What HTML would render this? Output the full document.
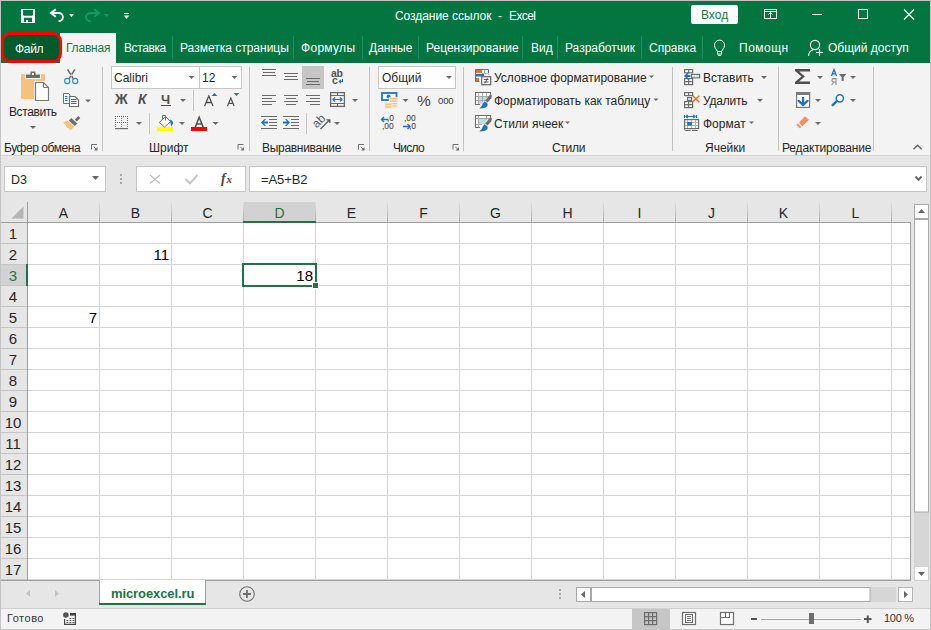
<!DOCTYPE html>
<html><head><meta charset="utf-8">
<style>
*{margin:0;padding:0;box-sizing:border-box}
html,body{width:931px;height:630px;overflow:hidden;background:#f3f3f3;font-family:"Liberation Sans",sans-serif;}
.a{position:absolute}
.t{position:absolute;white-space:nowrap;font-size:12px;line-height:12px;color:#262626}
.w{color:#fff}
.sep{position:absolute;width:1px;background:#d0d0d0}
.tsep{position:absolute;width:1px;top:36px;height:23px;background:#1f8d63}
.gsep{position:absolute;width:1px;top:67px;height:84px;background:#c2c2c2}
.dd{position:absolute;width:0;height:0;border-left:3px solid transparent;border-right:3px solid transparent;border-top:3px solid #6a6a6a}
.glab{position:absolute;top:142px;font-size:12px;line-height:12px;color:#262626;white-space:nowrap}
.launch{position:absolute;width:7px;height:7px}
.ch{position:absolute;top:202px;height:20px;font-size:14px;line-height:14px;color:#262626;text-align:center;padding-top:4px}
.rh{position:absolute;left:1px;width:26px;height:20px;font-size:14px;line-height:14px;color:#262626;text-align:center;padding-top:4px}
.cell{position:absolute;font-size:14px;line-height:14px;color:#000;text-align:right}
</style></head>
<body>
<!-- window border -->
<div class="a" style="left:0;top:0;width:931px;height:630px;border:1px solid #c4c4c4;z-index:50;pointer-events:none"></div>

<!-- title bar + tabs -->
<div class="a" style="left:1px;top:1px;width:929px;height:62px;background:#037541"></div>
<div class="t w" style="left:395px;top:10px;font-size:12px;letter-spacing:-0.05px">Создание ссылок</div>
<div class="t w" style="left:498px;top:10px;font-size:12px">-</div>
<div class="t w" style="left:509px;top:10px;font-size:12px;letter-spacing:-0.6px">Excel</div>

<!-- Vhod button -->
<div class="a" style="left:691px;top:5px;width:47px;height:19px;background:#fff;border-radius:2px"></div>
<div class="t" style="left:701px;top:9px;color:#217346">Вход</div>

<!-- tabs -->
<div class="a" style="left:1px;top:32px;width:61px;height:31px;background:#005a2a;border:3px solid #ff0000;border-radius:9px;z-index:2"></div>
<div class="t w" style="left:15px;top:43px;z-index:3;letter-spacing:-0.3px">Файл</div>
<div class="a" style="left:60px;top:33px;width:56px;height:30px;background:#f3f3f3"></div>
<div class="t" style="left:66px;top:42px;color:#217346;letter-spacing:-0.2px">Главная</div>
<div class="t w" style="left:124px;top:42px;letter-spacing:-0.4px">Вставка</div>
<div class="tsep" style="left:172px"></div>
<div class="t w" style="left:180px;top:42px;">Разметка страницы</div>
<div class="tsep" style="left:293px"></div>
<div class="t w" style="left:301px;top:42px;letter-spacing:0.3px">Формулы</div>
<div class="tsep" style="left:362px"></div>
<div class="t w" style="left:369px;top:42px;">Данные</div>
<div class="tsep" style="left:418px"></div>
<div class="t w" style="left:426px;top:42px;">Рецензирование</div>
<div class="tsep" style="left:522px"></div>
<div class="t w" style="left:531px;top:42px;">Вид</div>
<div class="tsep" style="left:557px"></div>
<div class="t w" style="left:565px;top:42px;">Разработчик</div>
<div class="tsep" style="left:641px"></div>
<div class="t w" style="left:649px;top:42px;">Справка</div>
<div class="tsep" style="left:702px"></div>
<div class="t w" style="left:739px;top:42px;letter-spacing:0.5px">Помощн</div>
<div class="t w" style="left:828px;top:42px;">Общий доступ</div>

<!-- ribbon -->
<div class="a" style="left:1px;top:155px;width:929px;height:1px;background:#d5d5d5"></div>

<!-- group separators -->
<div class="gsep" style="left:102px"></div>
<div class="gsep" style="left:249px"></div>
<div class="gsep" style="left:369px"></div>
<div class="gsep" style="left:463px"></div>
<div class="gsep" style="left:672px"></div>
<div class="gsep" style="left:778px"></div>
<div class="gsep" style="left:873px"></div>

<div class="glab" style="left:4px;letter-spacing:-0.45px">Буфер обмена</div>
<div class="glab" style="left:149px">Шрифт</div>
<div class="glab" style="left:262px;letter-spacing:-0.3px">Выравнивание</div>
<div class="glab" style="left:393px;letter-spacing:-0.7px">Число</div>
<div class="glab" style="left:552px;letter-spacing:-0.3px">Стили</div>
<div class="glab" style="left:705px">Ячейки</div>
<div class="glab" style="left:782px;letter-spacing:-0.15px">Редактирование</div>

<!-- paste -->
<div class="t" style="left:9px;top:106px;letter-spacing:-0.4px">Вставить</div>

<!-- font group -->
<div class="a" style="left:111px;top:66px;width:89px;height:23px;background:#fff;border:1px solid #c6c6c6"></div>
<div class="a" style="left:199px;top:66px;width:43px;height:23px;background:#fff;border:1px solid #c6c6c6"></div>
<div class="t" style="left:114px;top:72px">Calibri</div>
<div class="t" style="left:202px;top:72px">12</div>

<!-- number -->
<div class="a" style="left:378px;top:66px;width:78px;height:23px;background:#fff;border:1px solid #c6c6c6"></div>
<div class="t" style="left:382px;top:72px">Общий</div>

<!-- styles -->
<div class="t" style="left:494px;top:72px">Условное форматирование</div>
<div class="t" style="left:494px;top:95px">Форматировать как таблицу</div>
<div class="t" style="left:494px;top:118px">Стили ячеек</div>

<!-- cells -->
<div class="t" style="left:703px;top:72px">Вставить</div>
<div class="t" style="left:703px;top:95px;letter-spacing:-0.2px">Удалить</div>
<div class="t" style="left:703px;top:118px">Формат</div>

<!-- formula area -->
<div class="a" style="left:1px;top:156px;width:929px;height:424px;background:#e6e6e6"></div>
<div class="a" style="left:4px;top:166px;width:102px;height:26px;background:#fff;border:1px solid #c6c6c6"></div>
<div class="t" style="left:11px;top:174px;font-size:12.5px">D3</div>
<div class="a" style="left:136px;top:166px;width:110px;height:26px;background:#fff;border:1px solid #c6c6c6"></div>
<div class="a" style="left:249px;top:166px;width:678px;height:26px;background:#fff;border:1px solid #c6c6c6"></div>
<div class="t" style="left:261px;top:173px;font-size:13px;line-height:13px;letter-spacing:-0.1px">=A5+B2</div>

<!-- grid -->
<!--GRID-->
<div class="a" style="left:28px;top:223px;width:882px;height:357px;background:#fff"></div>
<div class="a" style="left:99px;top:223px;width:1px;height:357px;background:#d4d4d4"></div>
<div class="a" style="left:99px;top:202px;width:1px;height:20px;background:linear-gradient(#e0e0e0,#a8a8a8)"></div>
<div class="a" style="left:171px;top:223px;width:1px;height:357px;background:#d4d4d4"></div>
<div class="a" style="left:171px;top:202px;width:1px;height:20px;background:linear-gradient(#e0e0e0,#a8a8a8)"></div>
<div class="a" style="left:243px;top:223px;width:1px;height:357px;background:#d4d4d4"></div>
<div class="a" style="left:243px;top:202px;width:1px;height:20px;background:linear-gradient(#e0e0e0,#a8a8a8)"></div>
<div class="a" style="left:315px;top:223px;width:1px;height:357px;background:#d4d4d4"></div>
<div class="a" style="left:315px;top:202px;width:1px;height:20px;background:linear-gradient(#e0e0e0,#a8a8a8)"></div>
<div class="a" style="left:387px;top:223px;width:1px;height:357px;background:#d4d4d4"></div>
<div class="a" style="left:387px;top:202px;width:1px;height:20px;background:linear-gradient(#e0e0e0,#a8a8a8)"></div>
<div class="a" style="left:459px;top:223px;width:1px;height:357px;background:#d4d4d4"></div>
<div class="a" style="left:459px;top:202px;width:1px;height:20px;background:linear-gradient(#e0e0e0,#a8a8a8)"></div>
<div class="a" style="left:531px;top:223px;width:1px;height:357px;background:#d4d4d4"></div>
<div class="a" style="left:531px;top:202px;width:1px;height:20px;background:linear-gradient(#e0e0e0,#a8a8a8)"></div>
<div class="a" style="left:603px;top:223px;width:1px;height:357px;background:#d4d4d4"></div>
<div class="a" style="left:603px;top:202px;width:1px;height:20px;background:linear-gradient(#e0e0e0,#a8a8a8)"></div>
<div class="a" style="left:675px;top:223px;width:1px;height:357px;background:#d4d4d4"></div>
<div class="a" style="left:675px;top:202px;width:1px;height:20px;background:linear-gradient(#e0e0e0,#a8a8a8)"></div>
<div class="a" style="left:747px;top:223px;width:1px;height:357px;background:#d4d4d4"></div>
<div class="a" style="left:747px;top:202px;width:1px;height:20px;background:linear-gradient(#e0e0e0,#a8a8a8)"></div>
<div class="a" style="left:819px;top:223px;width:1px;height:357px;background:#d4d4d4"></div>
<div class="a" style="left:819px;top:202px;width:1px;height:20px;background:linear-gradient(#e0e0e0,#a8a8a8)"></div>
<div class="a" style="left:891px;top:223px;width:1px;height:357px;background:#d4d4d4"></div>
<div class="a" style="left:891px;top:202px;width:1px;height:20px;background:linear-gradient(#e0e0e0,#a8a8a8)"></div>
<div class="a" style="left:28px;top:243px;width:882px;height:1px;background:#d4d4d4"></div>
<div class="a" style="left:1px;top:243px;width:26px;height:1px;background:#c4c4c4"></div>
<div class="a" style="left:28px;top:264px;width:882px;height:1px;background:#d4d4d4"></div>
<div class="a" style="left:1px;top:264px;width:26px;height:1px;background:#c4c4c4"></div>
<div class="a" style="left:28px;top:285px;width:882px;height:1px;background:#d4d4d4"></div>
<div class="a" style="left:1px;top:285px;width:26px;height:1px;background:#c4c4c4"></div>
<div class="a" style="left:28px;top:306px;width:882px;height:1px;background:#d4d4d4"></div>
<div class="a" style="left:1px;top:306px;width:26px;height:1px;background:#c4c4c4"></div>
<div class="a" style="left:28px;top:327px;width:882px;height:1px;background:#d4d4d4"></div>
<div class="a" style="left:1px;top:327px;width:26px;height:1px;background:#c4c4c4"></div>
<div class="a" style="left:28px;top:348px;width:882px;height:1px;background:#d4d4d4"></div>
<div class="a" style="left:1px;top:348px;width:26px;height:1px;background:#c4c4c4"></div>
<div class="a" style="left:28px;top:369px;width:882px;height:1px;background:#d4d4d4"></div>
<div class="a" style="left:1px;top:369px;width:26px;height:1px;background:#c4c4c4"></div>
<div class="a" style="left:28px;top:390px;width:882px;height:1px;background:#d4d4d4"></div>
<div class="a" style="left:1px;top:390px;width:26px;height:1px;background:#c4c4c4"></div>
<div class="a" style="left:28px;top:411px;width:882px;height:1px;background:#d4d4d4"></div>
<div class="a" style="left:1px;top:411px;width:26px;height:1px;background:#c4c4c4"></div>
<div class="a" style="left:28px;top:432px;width:882px;height:1px;background:#d4d4d4"></div>
<div class="a" style="left:1px;top:432px;width:26px;height:1px;background:#c4c4c4"></div>
<div class="a" style="left:28px;top:453px;width:882px;height:1px;background:#d4d4d4"></div>
<div class="a" style="left:1px;top:453px;width:26px;height:1px;background:#c4c4c4"></div>
<div class="a" style="left:28px;top:474px;width:882px;height:1px;background:#d4d4d4"></div>
<div class="a" style="left:1px;top:474px;width:26px;height:1px;background:#c4c4c4"></div>
<div class="a" style="left:28px;top:495px;width:882px;height:1px;background:#d4d4d4"></div>
<div class="a" style="left:1px;top:495px;width:26px;height:1px;background:#c4c4c4"></div>
<div class="a" style="left:28px;top:516px;width:882px;height:1px;background:#d4d4d4"></div>
<div class="a" style="left:1px;top:516px;width:26px;height:1px;background:#c4c4c4"></div>
<div class="a" style="left:28px;top:537px;width:882px;height:1px;background:#d4d4d4"></div>
<div class="a" style="left:1px;top:537px;width:26px;height:1px;background:#c4c4c4"></div>
<div class="a" style="left:28px;top:558px;width:882px;height:1px;background:#d4d4d4"></div>
<div class="a" style="left:1px;top:558px;width:26px;height:1px;background:#c4c4c4"></div>
<div class="a" style="left:28px;top:579px;width:882px;height:1px;background:#d4d4d4"></div>
<div class="a" style="left:1px;top:579px;width:26px;height:1px;background:#c4c4c4"></div>
<div class="a" style="left:1px;top:222px;width:910px;height:1px;background:#9e9e9e"></div>
<div class="a" style="left:27px;top:202px;width:1px;height:379px;background:#9e9e9e"></div>
<div class="a" style="left:910px;top:222px;width:1px;height:359px;background:#9e9e9e"></div>
<div class="a" style="left:1px;top:580px;width:910px;height:1px;background:#9e9e9e"></div>
<svg class="a" style="left:11px;top:206px" width="13" height="13"><polygon points="12.5,0.5 12.5,12.5 0.5,12.5" fill="#b4b4b4"/></svg>
<div class="a" style="left:244px;top:202px;width:71px;height:19px;background:#d2d2d2"></div>
<div class="a" style="left:243px;top:221px;width:73px;height:2px;background:#217346"></div>
<div class="a" style="left:1px;top:265px;width:25px;height:20px;background:#d2d2d2"></div>
<div class="a" style="left:26px;top:264px;width:2px;height:22px;background:#217346"></div>
<div class="t" style="left:28px;top:206px;width:71px;text-align:center;font-size:14px;line-height:14px;color:#262626">A</div>
<div class="t" style="left:100px;top:206px;width:71px;text-align:center;font-size:14px;line-height:14px;color:#262626">B</div>
<div class="t" style="left:172px;top:206px;width:71px;text-align:center;font-size:14px;line-height:14px;color:#262626">C</div>
<div class="t" style="left:244px;top:206px;width:71px;text-align:center;font-size:14px;line-height:14px;color:#217346">D</div>
<div class="t" style="left:316px;top:206px;width:71px;text-align:center;font-size:14px;line-height:14px;color:#262626">E</div>
<div class="t" style="left:388px;top:206px;width:71px;text-align:center;font-size:14px;line-height:14px;color:#262626">F</div>
<div class="t" style="left:460px;top:206px;width:71px;text-align:center;font-size:14px;line-height:14px;color:#262626">G</div>
<div class="t" style="left:532px;top:206px;width:71px;text-align:center;font-size:14px;line-height:14px;color:#262626">H</div>
<div class="t" style="left:604px;top:206px;width:71px;text-align:center;font-size:14px;line-height:14px;color:#262626">I</div>
<div class="t" style="left:676px;top:206px;width:71px;text-align:center;font-size:14px;line-height:14px;color:#262626">J</div>
<div class="t" style="left:748px;top:206px;width:71px;text-align:center;font-size:14px;line-height:14px;color:#262626">K</div>
<div class="t" style="left:820px;top:206px;width:71px;text-align:center;font-size:14px;line-height:14px;color:#262626">L</div>
<div class="t" style="left:0px;top:226px;width:26px;text-align:center;font-size:15px;line-height:15px;color:#262626">1</div>
<div class="t" style="left:0px;top:247px;width:26px;text-align:center;font-size:15px;line-height:15px;color:#262626">2</div>
<div class="t" style="left:0px;top:268px;width:26px;text-align:center;font-size:15px;line-height:15px;color:#217346">3</div>
<div class="t" style="left:0px;top:289px;width:26px;text-align:center;font-size:15px;line-height:15px;color:#262626">4</div>
<div class="t" style="left:0px;top:310px;width:26px;text-align:center;font-size:15px;line-height:15px;color:#262626">5</div>
<div class="t" style="left:0px;top:331px;width:26px;text-align:center;font-size:15px;line-height:15px;color:#262626">6</div>
<div class="t" style="left:0px;top:352px;width:26px;text-align:center;font-size:15px;line-height:15px;color:#262626">7</div>
<div class="t" style="left:0px;top:373px;width:26px;text-align:center;font-size:15px;line-height:15px;color:#262626">8</div>
<div class="t" style="left:0px;top:394px;width:26px;text-align:center;font-size:15px;line-height:15px;color:#262626">9</div>
<div class="t" style="left:0px;top:415px;width:26px;text-align:center;font-size:15px;line-height:15px;color:#262626">10</div>
<div class="t" style="left:0px;top:436px;width:26px;text-align:center;font-size:15px;line-height:15px;color:#262626">11</div>
<div class="t" style="left:0px;top:457px;width:26px;text-align:center;font-size:15px;line-height:15px;color:#262626">12</div>
<div class="t" style="left:0px;top:478px;width:26px;text-align:center;font-size:15px;line-height:15px;color:#262626">13</div>
<div class="t" style="left:0px;top:499px;width:26px;text-align:center;font-size:15px;line-height:15px;color:#262626">14</div>
<div class="t" style="left:0px;top:520px;width:26px;text-align:center;font-size:15px;line-height:15px;color:#262626">15</div>
<div class="t" style="left:0px;top:541px;width:26px;text-align:center;font-size:15px;line-height:15px;color:#262626">16</div>
<div class="t" style="left:0px;top:562px;width:26px;text-align:center;font-size:15px;line-height:15px;color:#262626">17</div>
<div class="t" style="left:111px;top:247px;width:58px;text-align:right;font-size:15px;line-height:15px;color:#000">11</div>
<div class="t" style="left:39px;top:310px;width:58px;text-align:right;font-size:15px;line-height:15px;color:#000">7</div>
<div class="t" style="left:255px;top:268px;width:58px;text-align:right;font-size:15px;line-height:15px;color:#000">18</div>
<div class="a" style="left:242px;top:263px;width:75px;height:24px;border:2px solid #217346"></div>
<div class="a" style="left:312px;top:282px;width:7px;height:7px;background:#fff"></div>
<div class="a" style="left:313px;top:283px;width:5px;height:5px;background:#217346"></div>
<!--/GRID-->

<!-- sheet tab bar -->
<div class="a" style="left:1px;top:581px;width:929px;height:27px;background:#e6e6e6"></div>
<div class="a" style="left:1px;top:608px;width:929px;height:1px;background:#d0d0d0"></div>
<div class="a" style="left:99px;top:580px;width:107px;height:25px;background:#fff;border:1px solid #a0a0a0;border-top:none;border-bottom:none"></div>
<div class="a" style="left:99px;top:603px;width:107px;height:2px;background:#217346"></div>
<div class="t" style="left:111px;top:587px;font-size:13px;line-height:13px;font-weight:bold;color:#217346;letter-spacing:-0.1px">microexcel.ru</div>

<!-- status bar -->
<div class="t" style="left:7px;top:613px;font-size:11px;line-height:11px;color:#333;letter-spacing:0.5px">Готово</div>
<div class="a" style="left:632px;top:609px;width:38px;height:20px;background:#c6c6c6"></div>
<div class="t" style="left:884px;top:613px;font-size:11px;line-height:11px;color:#333;letter-spacing:-0.3px">100 %</div>

<!--TXTICONS-->
<div class="t" style="left:115px;top:92px;font-size:14px;line-height:14px;font-weight:bold;color:#505050">Ж</div>
<div class="t" style="left:138px;top:92px;font-size:14px;line-height:14px;font-weight:bold;font-style:italic;color:#505050">К</div>
<div class="t" style="left:161px;top:93px;font-size:13px;line-height:13px;font-weight:bold;color:#505050">Ч</div>
<div class="a" style="left:161px;top:105px;width:10px;height:1px;background:#505050"></div>
<div class="t" style="left:417px;top:93px;font-size:15.5px;line-height:15px;color:#444">%</div>
<div class="t" style="left:438px;top:96px;font-size:9.5px;line-height:10px;color:#333;letter-spacing:-0.1px">000</div>
<div class="t" style="left:331px;top:68px;font-size:10.5px;line-height:10px;font-weight:bold;color:#555;letter-spacing:-0.3px">ab</div>
<div class="t" style="left:332px;top:75px;font-size:10.5px;line-height:10px;font-weight:bold;color:#555">c</div>
<div class="t" style="left:387px;top:114px;font-size:8.5px;line-height:9px;color:#333">,0</div>
<div class="t" style="left:382px;top:122px;font-size:8.5px;line-height:9px;color:#333">,00</div>
<div class="t" style="left:404px;top:114px;font-size:8.5px;line-height:9px;color:#333">,00</div>
<div class="t" style="left:409px;top:122px;font-size:8.5px;line-height:9px;color:#333">,0</div>
<div class="t" style="left:312px;top:115px;font-size:12px;line-height:12px;color:#555;transform:rotate(-45deg);transform-origin:50% 50%">ab</div>
<!--/TXTICONS-->
<!--ICONS-->
<svg class="a" style="left:0;top:0;z-index:5" width="931" height="630" viewBox="0 0 931 630" shape-rendering="geometricPrecision">
<!-- ===== title bar ===== -->
<!-- save -->
<path fill="#fff" fill-rule="evenodd" d="M21,9H35V23H21Z M23,10V15L24,15.8H32L33,15V10Z M24,17.8V22H26V20H28V22H32V17.8Z"/>
<!-- undo -->
<g fill="none" stroke="#fff" stroke-width="1.8">
<path d="M52,13H59A4.1,4.05 0 0 1 58.6,21.1"/>
<path d="M55.8,9.3L51,13L55.8,16.7" stroke-width="2"/>
</g>
<path fill="#fff" d="M69,14H74L71.5,17Z"/>
<!-- redo -->
<g fill="none" stroke="#169a6a" stroke-width="1.9">
<path d="M98,13H90.2A4.4,4.1 0 0 0 90.6,21.2"/>
<path d="M94.2,9.3L99,13L94.2,16.7" stroke-width="2"/>
</g>
<path fill="#169a6a" d="M104,14H109L106.5,17Z"/>
<!-- customize -->
<rect x="124" y="13" width="5" height="1" fill="#fff"/>
<path fill="#fff" d="M123.8,15.5H129.2L126.5,19Z"/>
<!-- ribbon display -->
<g fill="none" stroke="#fff" stroke-width="1">
<rect x="764.5" y="9.5" width="12" height="9"/>
<path d="M764,11.5H777 M770.5,12.5V19 M768.5,14.5L770.5,12.5L772.5,14.5"/>
<path d="M812,14.5H822"/>
<rect x="858.5" y="9.5" width="9" height="9"/>
<path d="M904,9.5L914,19.5M914,9.5L904,19.5" stroke-width="1.1"/>
</g>
<!-- bulb -->
<g fill="none" stroke="#fff" stroke-width="1">
<path d="M717.5,51.5C716.5,49.5 714.5,48 714.5,45.3A5,5.2 0 1 1 724.5,45.3C724.5,48 722.5,49.5 721.5,51.5Z"/>
<rect x="717.5" y="51.5" width="4" height="2.5"/>
<path d="M718,55.5H721"/>
</g>
<!-- person -->
<g fill="none" stroke="#fff" stroke-width="1.1">
<circle cx="815" cy="45" r="4.6"/>
<path d="M808.5,56C808.8,52.5 810.5,50.5 813,49.8"/>
<path d="M816,52.5H823M819.5,49V56"/>
</g>

<!-- ===== clipboard group ===== -->
<path fill="#f6c27b" d="M21,75Q21,74 22,74H25V79H41V74H44Q45,74 45,75V81H34V99H22Q21,99 21,98Z"/>
<path fill="#6d6d6d" d="M26,74.5H40V78H26Z M30.5,71.5H35.5V74.5H30.5Z"/>
<rect x="32" y="73" width="2" height="2" fill="#fff"/>
<path fill="#fff" stroke="#777" stroke-width="1.2" d="M35.5,82.5H43.5L48.5,87.5V100.5H35.5Z"/>
<path fill="none" stroke="#777" stroke-width="1" d="M43.5,82.5V87.5H48.5"/>
<!-- scissors -->
<path fill="#666" d="M66.8,69.5L68.4,69.3L73.8,78.2L72.6,79Z M75.6,69.5L74,69.3L68.6,78.2L69.8,79Z"/>
<g fill="none" stroke="#3585c6" stroke-width="1.1">
<circle cx="67.2" cy="81" r="2.6"/>
<circle cx="75.2" cy="81" r="2.6"/>
</g>
<!-- copy -->
<path fill="#fff" stroke="#6d6d6d" stroke-width="1" d="M63.5,93.5H68.5L70,95V103.5H63.5Z"/>
<path fill="#fff" stroke="#6d6d6d" stroke-width="1.2" d="M69.5,96.5H75L78.5,100V106.5H69.5Z"/>
<g stroke="#2272b9" stroke-width="1"><path d="M65,96.5H67.5M65,98.5H67.5M65,100.5H67.5M71,99.5H76.5M71,101.5H76.5M71,103.5H76.5"/></g>
<!-- format painter -->
<path fill="#f6c27b" d="M63,122.5L67.5,120.5L74.5,126.5L70.5,130.5L69,128.5L66.5,127.5L65.5,125Z"/>
<path fill="#6d6d6d" d="M68.8,120.5L71.3,118L77.3,123.5L74.8,126Z"/>
<path fill="#6d6d6d" d="M74.8,119.5L78.3,116L80.3,118L76.8,121.5Z"/>

<!-- ===== font group ===== -->
<!-- borders dotted -->
<g fill="#6d6d6d">
<path d="M115,116h1v1h-1zM117,116h1v1h-1zM119,116h1v1h-1zM121,116h1v1h-1zM123,116h1v1h-1zM125,116h1v1h-1zM127,116h1v1h-1z"/>
<path d="M115,122h1v1h-1zM117,122h1v1h-1zM119,122h1v1h-1zM121,122h1v1h-1zM123,122h1v1h-1zM125,122h1v1h-1zM127,122h1v1h-1z"/>
<path d="M115,118h1v1h-1zM115,120h1v1h-1zM115,124h1v1h-1zM115,126h1v1h-1z"/>
<path d="M121,118h1v1h-1zM121,120h1v1h-1zM121,124h1v1h-1zM121,126h1v1h-1z"/>
<path d="M127,118h1v1h-1zM127,120h1v1h-1zM127,124h1v1h-1zM127,126h1v1h-1z"/>
<rect x="115" y="128" width="13" height="1.2"/>
</g>
<!-- fill bucket -->
<rect x="157" y="127" width="16" height="4" fill="#ffff00"/>
<path fill="#fff" stroke="#6d6d6d" stroke-width="1" d="M159.3,122.5L165.5,116.5L170.5,121.7L164.5,127Z"/>
<path fill="none" stroke="#6d6d6d" stroke-width="1" d="M162.5,119.3V115.5H165.5V120.5"/>
<path fill="#1e73be" d="M170,119.5Q173.5,121 173,123.5L171.5,126.5Q170.5,124 170.3,122Z"/>
<!-- font color -->
<rect x="191" y="127" width="16" height="4" fill="#ff0000"/>
<path fill="none" stroke="#505050" stroke-width="1.6" d="M195.3,127L199.2,117.3L203.1,127M196.6,124H201.8"/>

<!-- A grow/shrink -->
<path fill="none" stroke="#505050" stroke-width="1.3" d="M204.6,106L208.8,96L213,106M206,102.5H211.6"/>
<path fill="#1e73be" d="M211.5,96H217.5L214.5,93Z"/>
<path fill="none" stroke="#505050" stroke-width="1.2" d="M227.5,106L230.8,98L234.1,106M228.7,103.3H233"/>
<path fill="#1e73be" d="M233.7,93H239.3L236.5,96Z"/>

<!-- ===== alignment ===== -->
<rect x="302" y="66" width="22" height="23" fill="#c6c6c6"/>
<g stroke="#6a6a6a" stroke-width="1">
<path d="M262,69.5H276M263,72.5H275M262,75.5H276"/>
<path d="M284,73.5H298M285,76.5H297M284,79.5H298"/>
<path d="M306,78.5H320M307,81.5H319M306,84.5H320"/>
<path d="M262,95.5H276M262,98.5H272M262,101.5H276M262,104.5H272"/>
<path d="M284,95.5H298M286,98.5H296M284,101.5H298M286,104.5H296"/>
<path d="M306,95.5H320M310,98.5H320M306,101.5H320M310,104.5H320"/>
<path d="M261,116.5H277M269,119.5H277M269,122.5H277M269,125.5H277M261,128.5H277"/>
<path d="M283,116.5H299M291,119.5H299M291,122.5H299M291,125.5H299M283,128.5H299"/>
</g>
<!-- indent arrows -->
<path fill="#1e73be" d="M261,122.5L264.5,119H266L263.8,121.6H268V123.4H263.8L266,126H264.5Z"/>
<path fill="#1e73be" d="M290,122.5L286.5,119H285L287.2,121.6H283V123.4H287.2L285,126H286.5Z"/>
<!-- merge -->
<g fill="none" stroke="#6a6a6a">
<rect x="330.6" y="92.6" width="13.8" height="13.8" stroke-width="1.3"/>
<path d="M331,95.5H344M331,103.5H344M337.5,93V95.5M337.5,103.5V106" stroke-width="1"/>
</g>
<path fill="none" stroke="#1e73be" stroke-width="1.2" d="M333,99.5H342M335,97.5L333,99.5L335,101.5M340,97.5L342,99.5L340,101.5"/>
<!-- orientation -->
<path fill="none" stroke="#555" stroke-width="1.2" d="M320.5,129L329.5,120M326.5,119.8H329.8V123"/>

<!-- ===== number ===== -->
<rect x="382" y="93" width="14.5" height="7" fill="#fff" stroke="#1e73be" stroke-width="1.8"/>
<circle cx="388.6" cy="96.5" r="2" fill="#1e73be"/>
<g fill="#f6c27b" stroke="#f3f3f3" stroke-width="0.8">
<path d="M389.3,104.8h8v2.2h-8z"/>
<path d="M389.3,102.4h8v2.4h-8z"/>
<path d="M389.3,99.8h8v2.6h-8z"/>
<path d="M389.3,97.3h8v2.5h-8z" />
<path d="M384.5,105.6h7.5v2.5h-7.5z"/>
<path d="M384.5,103h7.5v2.6h-7.5z"/>
</g>
<path fill="none" stroke="#1e73be" stroke-width="1.4" d="M381.5,119.5H388.5M384,117L381.5,119.5L384,122"/>
<path fill="none" stroke="#1e73be" stroke-width="1.4" d="M403,126.5H410M407.5,124L410,126.5L407.5,129"/>

<!-- ===== styles ===== -->
<!-- conditional formatting -->
<path fill="#fff" d="M476,70H489V75H484V77H481V82H476Z"/>
<path fill="none" stroke="#6d6d6d" stroke-width="1" d="M479.5,81.5H475.5V69.5H488.5V74.5"/>
<rect x="476" y="70" width="6" height="3" fill="#e86f24"/>
<rect x="476" y="74" width="8" height="2.5" fill="#1e73be"/>
<rect x="476" y="78" width="3" height="3" fill="#e86f24"/>
<path stroke="#b0b0b0" stroke-width="1" d="M484.5,70V73M482,73.5H489"/>
<rect x="481.7" y="76.7" width="9" height="8" fill="#fff" stroke="#6d6d6d" stroke-width="1.3"/>
<path stroke="#555" stroke-width="1" d="M483.8,79.5H488.5M483.8,82H488.5M487.5,78L484.8,83.5"/>
<!-- format as table -->
<path fill="#fff" d="M476,93H490V96L484,104H476Z"/>
<rect x="479" y="97" width="7" height="3" fill="#b9dfe0"/>
<rect x="479" y="101" width="3.5" height="3" fill="#b9dfe0"/>
<path stroke="#a8a8a8" stroke-width="1" d="M478.5,93V104M482.5,93V102M486.5,93V98M476,96.5H490M476,100.5H486"/>
<path fill="none" stroke="#6d6d6d" stroke-width="1.1" d="M480,104.5H475.5V92.5H490.5V94.5"/>
<path fill="#6d6d6d" d="M490.2,94.3L492,95.5L491.3,98.3L487.6,102.6L485.2,100.4Z"/>
<path fill="#1e73be" d="M484.6,101.3Q488.3,103 487.6,105.6Q486.5,108.5 479.3,108.6Q482.3,106.6 482.8,103.6Z"/>
<!-- cell styles -->
<path fill="#fff" d="M476,116H490V119L484,127H476Z"/>
<rect x="479" y="119" width="7.5" height="5" fill="#b9dfe0"/>
<path stroke="#a8a8a8" stroke-width="1" d="M478.5,116V127M486.5,116V120M476,118.5H490M476,124.5H482"/>
<path fill="none" stroke="#6d6d6d" stroke-width="1.1" d="M480,127.5H475.5V115.5H490.5V117.5"/>
<path fill="#6d6d6d" d="M490.2,117.3L492,118.5L491.3,121.3L487.6,125.6L485.2,123.4Z"/>
<path fill="#1e73be" d="M484.6,124.3Q488.3,126 487.6,128.6Q486.5,131.5 479.3,131.6Q482.3,129.6 482.8,126.6Z"/>

<!-- ===== cells ===== -->
<!-- insert -->
<g fill="#fff" stroke="#6d6d6d" stroke-width="1.2">
<rect x="684.6" y="69.6" width="8" height="3.2"/>
<path d="M688.6,69.6V72.8"/>
<rect x="684.6" y="78.6" width="8" height="6"/>
<path d="M688.6,78.6V84.6M684.6,81.6H692.6"/>
<rect x="691.6" y="74.4" width="8" height="3.4"/>
</g>
<rect x="692.4" y="75.1" width="2.8" height="2" fill="#bfe8e8"/>
<rect x="696.2" y="75.1" width="2.8" height="2" fill="#bfe8e8"/>
<path fill="#1e73be" d="M684,76L687.5,72.5H689.5L687.3,75H690.5V77H687.3L689.5,79.5H687.5Z"/>
<!-- delete -->
<g fill="#fff" stroke="#6d6d6d" stroke-width="1.2">
<rect x="684.6" y="92.6" width="8" height="3"/>
<path d="M688.6,92.6V95.6"/>
<rect x="684.6" y="101.6" width="8" height="6"/>
<path d="M688.6,101.6V107.6M684.6,104.6H692.6"/>
<rect x="687.6" y="97.6" width="4" height="2.8"/>
</g>
<rect x="688.3" y="98.3" width="2.6" height="1.5" fill="#bfe8e8"/>
<path stroke="#e86f24" stroke-width="1.5" d="M692.5,102L699.3,95.8M692.8,95.8L699.3,102.2"/>
<!-- format -->
<g stroke="#1e73be" stroke-width="1.2" fill="none">
<path d="M684.5,115V118M696.5,115V118M686,116.5H695M687.8,115L686,116.5L687.8,118M693.2,115L695,116.5L693.2,118"/>
</g>
<rect x="684.6" y="119.6" width="14" height="9" fill="#fff" stroke="#6d6d6d" stroke-width="1.2"/>
<path stroke="#b0b0b0" stroke-width="1" d="M687.5,120V128M691.5,120V128M695.5,120V128M685,122.5H698M685,125.5H698"/>
<rect x="687.2" y="122" width="4.7" height="3.6" fill="#1e73be"/>
<path fill="none" stroke="#6d6d6d" stroke-width="1" d="M684.6,128.6V129.5Q684.6,130.5 685.6,130.5H690.5M692,130.5H697.5"/>

<!-- ===== editing ===== -->
<path fill="#505050" d="M795,69H810V71.5H799.2L804.8,76.5L799.2,81.5H810V84H795V82L801.5,76.5L795,71Z"/>
<!-- sort A/Я -->
<path fill="none" stroke="#1e73be" stroke-width="1.3" d="M831.5,76L834,69.5L836.5,76M832.3,73.8H835.7"/>
<path fill="none" stroke="#8a8a8a" stroke-width="1.05" d="M836,85V78.6H833.6A1.7,1.7 0 0 0 833.6,82H836M833.8,82L831.6,85"/>
<path fill="#6d6d6d" d="M839,74H846.3L843.7,77.2V81H841.6V77.2Z"/>
<!-- fill down -->
<rect x="796.6" y="92.6" width="13" height="14.8" fill="#fff" stroke="#7a7a7a" stroke-width="1.2"/>
<rect x="796" y="92" width="14.2" height="3" fill="#7a7a7a"/>
<path fill="#1e73be" d="M802,97H804.2V102.5L806.7,100H808.5V101.5L803.1,106.5L797.7,101.5V100H799.5L802,102.5Z"/>
<!-- find -->
<circle cx="839.8" cy="98.3" r="3.6" fill="#fff" stroke="#1e73be" stroke-width="1.5"/>
<path stroke="#1e73be" stroke-width="2.4" stroke-linecap="round" d="M832.6,105.2L836.8,101.2"/>
<!-- eraser -->
<path fill="#fa8e5f" d="M805,116.3L808.9,119.8L802.4,126.2L799,122.6Z"/>
<path fill="#fa8e5f" d="M797.8,123.3L801.2,127L800,128.6L796.3,125Z"/>

<rect x="193" y="90" width="1" height="21" fill="#c6c6c6"/>
<rect x="149" y="113" width="1" height="21" fill="#c6c6c6"/>
<rect x="306" y="113" width="1" height="21" fill="#c6c6c6"/>
<path fill="none" stroke="#1e73be" stroke-width="1.2" d="M342.5,79V81.5H339.5M341,80L339.3,81.5L341,83"/>
<!-- collapse ribbon -->
<path fill="none" stroke="#666" stroke-width="1.5" d="M913.5,149.3L917.6,145.2L921.7,149.3"/>

<!-- ===== dropdown arrows ===== -->
<g fill="#6a6a6a">
<path d="M30,126H36L33,129Z"/>
<path d="M85,99.5H91L88,102.5Z"/>
<path d="M188.5,76H194.5L191.5,79Z"/>
<path d="M231.5,76H237.5L234.5,79Z"/>
<path d="M180,99H186L183,102Z"/>
<path d="M136,122H142L139,125Z"/>
<path d="M179,122H185L182,125Z"/>
<path d="M212.5,122H218.5L215.5,125Z"/>
<path d="M352,99H358L355,102Z"/>
<path d="M334,122H340L337,125Z"/>
<path d="M446,76H452L449,79Z"/>
<path d="M402.5,99H408.5L405.5,102Z"/>
<path d="M649,75.5H654L651.5,78Z"/>
<path d="M653.5,98.5H658.5L656,101Z"/>
<path d="M565,121.5H570L567.5,124Z"/>
<path d="M761,76H767L764,79Z"/>
<path d="M757,99H763L760,102Z"/>
<path d="M749,121.5H754L751.5,124Z"/>
<path d="M817,76H823L820,79Z"/>
<path d="M850,76H856L853,79Z"/>
<path d="M815,99H821L818,102Z"/>
<path d="M850,99H856L853,102Z"/>
<path d="M815,122H821L818,125Z"/>
</g>

<!-- ===== launchers ===== -->
<g id="ln">
<path fill="none" stroke="#6d6d6d" stroke-width="1" d="M91.5,149.5V144.5H97"/>
<path fill="#6d6d6d" d="M97.5,147V150.5H94Z"/>
<path fill="none" stroke="#6d6d6d" stroke-width="1" d="M93.8,146.8L97,150"/>
</g>
<use href="#ln" x="146.5"/>
<use href="#ln" x="267"/>
<use href="#ln" x="361.5"/>

<!-- ===== formula bar ===== -->
<path fill="#666" d="M92,176H99L95.5,180Z"/>
<g fill="#a6a6a6"><rect x="120" y="174" width="2" height="2"/><rect x="120" y="178" width="2" height="2"/><rect x="120" y="182" width="2" height="2"/></g>
<path fill="none" stroke="#bdbdbd" stroke-width="1.3" d="M150,175L160,183.5M160,175L150,183.5"/>
<path fill="none" stroke="#c6c6c6" stroke-width="2" d="M185.5,179L190,183.3L197.5,175"/>
<text x="221" y="183" font-family="Liberation Serif" font-style="italic" font-weight="bold" font-size="14" fill="#4a4a4a">f</text>
<text x="226.5" y="183" font-family="Liberation Serif" font-style="italic" font-weight="bold" font-size="11" fill="#4a4a4a">x</text>
<path fill="none" stroke="#666" stroke-width="2" d="M915.5,176.5L918.5,179.8L921.5,176.5"/>

<!-- ===== scrollbars ===== -->
<!-- vertical -->
<rect x="914" y="204" width="15" height="376" fill="#d6d6d6"/>
<rect x="914.5" y="204.5" width="14" height="14" fill="#fff" stroke="#a8a8a8"/>
<rect x="914.5" y="219.5" width="14" height="292.5" fill="#fff" stroke="#a8a8a8"/>
<rect x="914" y="218" width="15" height="2" fill="#a8a8a8"/>
<rect x="914.5" y="566.5" width="14" height="14" fill="#fff" stroke="#cdcdcd"/>
<path fill="#666" d="M918,213H925L921.5,209Z"/>
<path fill="#666" d="M918,572H925L921.5,576Z"/>
<!-- horizontal -->
<rect x="576" y="587" width="320" height="15" fill="#d6d6d6"/>
<rect x="576.5" y="587.5" width="14" height="14" fill="#fff" stroke="#a8a8a8"/>
<rect x="590" y="587" width="2" height="15" fill="#a8a8a8"/>
<rect x="591.5" y="587.5" width="278.5" height="14" fill="#fff" stroke="#a8a8a8"/>
<rect x="898.5" y="587.5" width="14" height="14" fill="#fff" stroke="#b4b4b4"/>
<path fill="#666" d="M585,591V598L581,594.5Z"/>
<path fill="#666" d="M904,591V598L908,594.5Z"/>
<g fill="#a6a6a6"><rect x="559" y="589" width="2" height="2"/><rect x="559" y="593" width="2" height="2"/><rect x="559" y="597" width="2" height="2"/></g>
<!-- sheet nav -->
<path fill="#c2c2c2" d="M30,590V597L26,593.5Z"/>
<path fill="#c2c2c2" d="M55,590V597L59,593.5Z"/>
<!-- plus circle -->
<circle cx="247" cy="594" r="7.3" fill="none" stroke="#707070" stroke-width="1.1"/>
<path stroke="#6d6d6d" stroke-width="1.8" d="M243,594H251M247,590V598"/>

<!-- ===== status bar ===== -->
<circle cx="65.9" cy="615" r="2.8" fill="#555"/>
<path fill="none" stroke="#444" stroke-width="1.2" d="M64.6,619V624.4H75.4V613.6H70"/>
<rect x="70" y="613" width="6" height="2.6" fill="#444"/>
<g fill="#555"><rect x="69.5" y="618" width="1.8" height="1"/><rect x="72.5" y="618" width="1.8" height="1"/>
<rect x="66.5" y="620" width="1.8" height="1"/><rect x="69.5" y="620" width="1.8" height="1"/><rect x="72.5" y="620" width="1.8" height="1"/>
<rect x="66.5" y="622" width="1.8" height="1"/><rect x="69.5" y="622" width="1.8" height="1"/><rect x="72.5" y="622" width="1.8" height="1"/></g>
<!-- normal view -->
<rect x="644.6" y="612.6" width="12" height="12" fill="none" stroke="#6d6d6d" stroke-width="1.2"/>
<path stroke="#6d6d6d" stroke-width="1.2" d="M648.6,613V624.5M652.6,613V624.5M645,616.6H656.5M645,620.6H656.5"/>
<!-- page layout -->
<rect x="682.5" y="612.5" width="13" height="12" fill="#fff" stroke="#6d6d6d" stroke-width="1.2"/>
<rect x="685.5" y="614.5" width="7" height="8" fill="none" stroke="#6d6d6d" stroke-width="1"/>
<path stroke="#6d6d6d" stroke-width="1" d="M687,616.5H691M687,618.5H691M687,620.5H691"/>
<!-- page break -->
<rect x="720.5" y="612.5" width="13" height="12" fill="#fff" stroke="#6d6d6d" stroke-width="1.2"/>
<path fill="none" stroke="#6d6d6d" stroke-width="1.1" d="M721,617.5H729.5V613M725.5,613V617.5"/>
<!-- zoom -->
<rect x="751" y="618" width="6" height="2" fill="#555"/>
<rect x="761" y="619" width="100" height="1" fill="#a6a6a6"/>
<rect x="809" y="613" width="5" height="11" fill="#6d6d6d"/>
<path stroke="#555" stroke-width="2" d="M864,619H871.5M867.8,615.5V623"/>
</svg>

<!--/ICONS-->
</body></html>
